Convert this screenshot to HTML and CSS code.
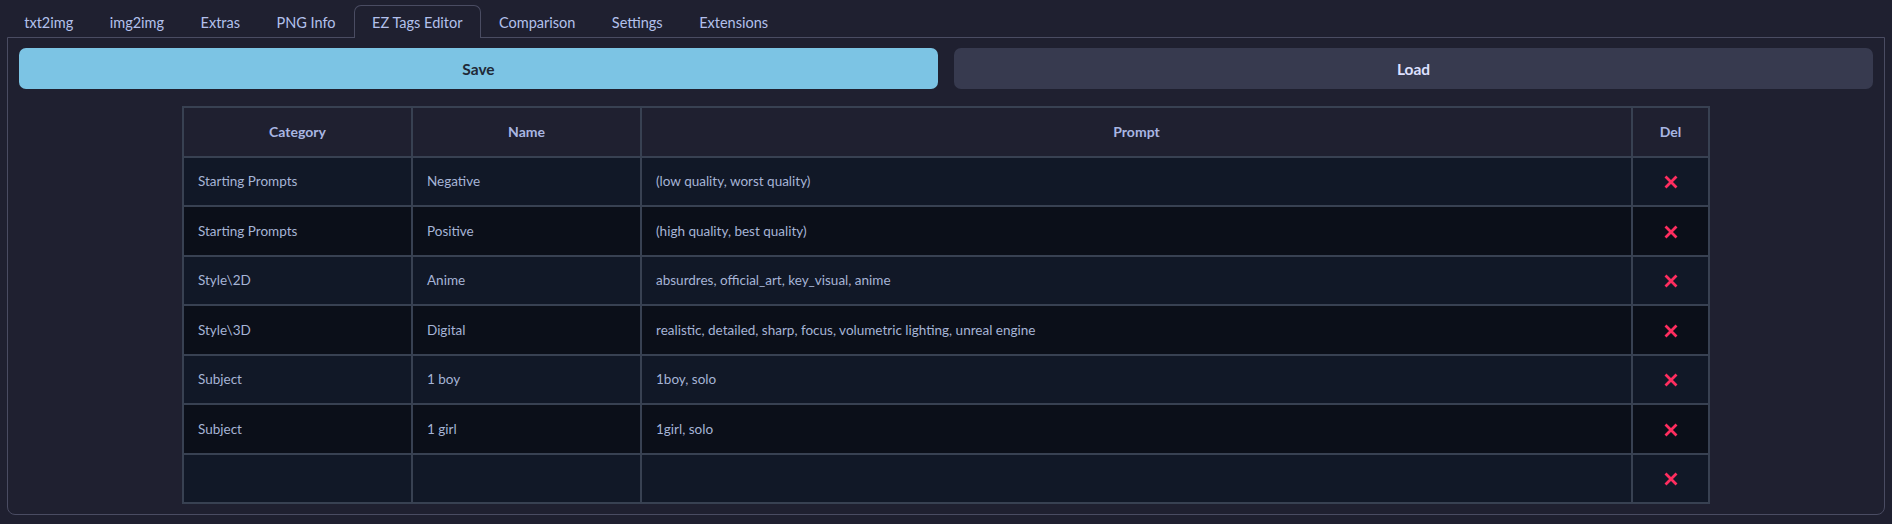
FILE: index.html
```html
<!DOCTYPE html>
<html>
<head>
<meta charset="utf-8">
<link rel="stylesheet" href="styles.css">
</head>
<body>
<div class="app">
  <div class="tabs">
    <div class="tab">txt2img</div>
    <div class="tab">img2img</div>
    <div class="tab">Extras</div>
    <div class="tab">PNG Info</div>
    <div class="tab active">EZ Tags Editor</div>
    <div class="tab">Comparison</div>
    <div class="tab">Settings</div>
    <div class="tab">Extensions</div>
  </div>
  <div class="panel">
    <div class="buttons">
      <button class="btn primary">Save</button>
      <button class="btn secondary">Load</button>
    </div>
    <table class="tags">
      <colgroup>
        <col class="c-cat"><col class="c-name"><col class="c-prompt"><col class="c-del">
      </colgroup>
      <thead>
        <tr><th>Category</th><th>Name</th><th>Prompt</th><th>Del</th></tr>
      </thead>
      <tbody>
        <tr><td>Starting Prompts</td><td>Negative</td><td>(low quality, worst quality)</td><td class="del"><svg viewBox="0 0 16 16" width="16" height="16"><path d="M2.5 2.5L13.5 13.5M13.5 2.5L2.5 13.5"/></svg></td></tr>
        <tr><td>Starting Prompts</td><td>Positive</td><td>(high quality, best quality)</td><td class="del"><svg viewBox="0 0 16 16" width="16" height="16"><path d="M2.5 2.5L13.5 13.5M13.5 2.5L2.5 13.5"/></svg></td></tr>
        <tr><td>Style\2D</td><td>Anime</td><td>absurdres, official_art, key_visual, anime</td><td class="del"><svg viewBox="0 0 16 16" width="16" height="16"><path d="M2.5 2.5L13.5 13.5M13.5 2.5L2.5 13.5"/></svg></td></tr>
        <tr><td>Style\3D</td><td>Digital</td><td>realistic, detailed, sharp, focus, volumetric lighting, unreal engine</td><td class="del"><svg viewBox="0 0 16 16" width="16" height="16"><path d="M2.5 2.5L13.5 13.5M13.5 2.5L2.5 13.5"/></svg></td></tr>
        <tr><td>Subject</td><td>1 boy</td><td>1boy, solo</td><td class="del"><svg viewBox="0 0 16 16" width="16" height="16"><path d="M2.5 2.5L13.5 13.5M13.5 2.5L2.5 13.5"/></svg></td></tr>
        <tr><td>Subject</td><td>1 girl</td><td>1girl, solo</td><td class="del"><svg viewBox="0 0 16 16" width="16" height="16"><path d="M2.5 2.5L13.5 13.5M13.5 2.5L2.5 13.5"/></svg></td></tr>
        <tr><td></td><td></td><td></td><td class="del"><svg viewBox="0 0 16 16" width="16" height="16"><path d="M2.5 2.5L13.5 13.5M13.5 2.5L2.5 13.5"/></svg></td></tr>
      </tbody>
    </table>
  </div>
</div>
</body>
</html>
```

FILE: styles.css
```css
* { box-sizing: border-box; }
html, body {
  margin: 0;
  padding: 0;
  background: #1f2030;
  font-family: "Lato", "Noto Sans", sans-serif;
}
.app {
  padding: 5px 7px 9px 7px;
}
.tabs {
  display: flex;
  height: 33px;
  margin-left: -1px;
  position: relative;
  z-index: 1;
}
.tab {
  padding: 0 17.25px;
  height: 33px;
  line-height: 33px;
  font-size: 14.5px;
  color: #b3c0ec;
  border: 1px solid transparent;
  border-bottom: none;
}
.tab.active {
  border-color: #4a4c62;
  border-radius: 7px 7px 0 0;
  background: #1f2030;
  height: 33px;
}
.panel {
  margin-top: -1px;
  border: 1px solid #4a4c62;
  border-radius: 0 0 8px 8px;
  padding: 10px 11px 10px 11px;
  display: flex;
  flex-direction: column;
  align-items: center;
  gap: 17px;
}
.buttons {
  display: flex;
  gap: 16px;
  width: 100%;
}
.btn {
  flex: 1;
  height: 41px;
  border: none;
  border-radius: 7px;
  font-family: inherit;
  font-weight: 700;
  font-size: 15.5px;
}
.btn.primary {
  background: #7cc4e4;
  color: #1f2937;
}
.btn.secondary {
  background: #373a4f;
  color: #dde0ff;
}
.tags {
  width: 1528px;
  border-collapse: collapse;
  border: 2px solid #384152;
  table-layout: fixed;
}
.c-cat { width: 229px; }
.c-name { width: 229px; }
.c-del { width: 77px; }
.tags th, .tags td {
  border: 2px solid #384152;
  height: 49.5px;
  padding: 0 14px;
  font-size: 13.5px;
  text-align: left;
  color: #a6b4d6;
}
.tags th {
  background: #1f2030;
  color: #a9b6e2;
  font-weight: 700;
  font-size: 14px;
  text-align: center;
}
.tags tbody tr:nth-child(odd) td { background: #111827; }
.tags tbody tr:nth-child(even) td { background: #0b0f19; }
.tags td.del { text-align: center; padding: 0; }
.tags td.del svg { display: inline-block; vertical-align: middle; }
.tags td.del path {
  stroke: #ff2d5f;
  stroke-width: 2.8;
  fill: none;
}
```
